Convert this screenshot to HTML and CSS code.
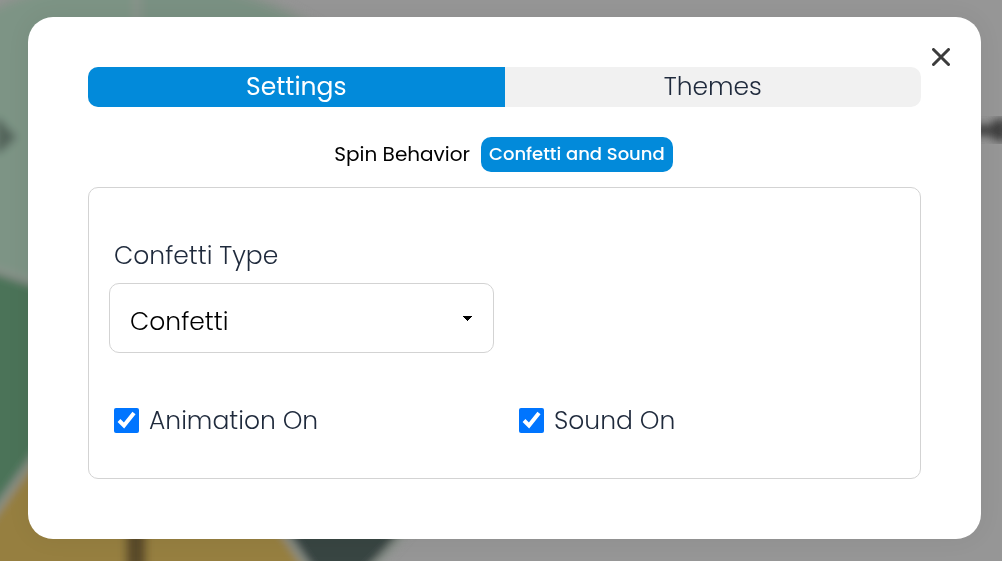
FILE: index.html
```html
<!DOCTYPE html>
<html lang="en">
<head>
<meta charset="utf-8">
<meta name="viewport" content="width=device-width, initial-scale=1">
<title>Wheel settings</title>
<link rel="stylesheet" href="styles.css">
</head>
<body>
<svg class="backdrop" aria-hidden="true">
  <defs>
    <filter id="soft" x="-10%" y="-10%" width="120%" height="120%"><feGaussianBlur stdDeviation="4"/></filter>
  </defs>
  <g filter="url(#soft)">
    <g transform="translate(137 316)" stroke="#8b938c" stroke-width="7">
      <path fill="#7d9485" d="M0 0L-323-105A340 340 0 0 1 0-340Z"/>
      <path fill="#7a9183" d="M0 0L0-340A340 340 0 0 1 323-105Z"/>
      <path fill="#374443" d="M0 0L323-105A346 346 0 0 1 194 286Z"/>
      <path fill="#967f3f" d="M0 0L194 286A346 346 0 0 1-200 275Z"/>
      <path fill="#4b7359" d="M0 0L-200 275A340 340 0 0 1-323-105Z"/>
    </g>
    <path d="M-4 120L3 128L12 137L6 143L-4 151" fill="#53645a" stroke="#53645a" stroke-width="7"/>
    <path d="M136 525V575" stroke="#5a4b29" stroke-width="20"/>
  </g>
</svg>
<svg class="marker" viewBox="0 0 24 30" aria-hidden="true">
  <path filter="url(#soft)" fill="#414141" d="M-4 8L10 11L18 4H30V26H18L10 20L-4 22Z"/>
</svg>
<main class="dialog" role="dialog" aria-label="Settings">
  <button class="close" type="button" aria-label="Close">
    <svg viewBox="0 0 18 18" aria-hidden="true"><path d="M1.5 1.5L16.5 16.5M16.5 1.5L1.5 16.5"/></svg>
  </button>
  <div class="tabs" role="tablist">
    <button class="tab tab-active" type="button" role="tab" aria-selected="true">Settings</button>
    <button class="tab" type="button" role="tab" aria-selected="false">Themes</button>
  </div>
  <div class="subtabs" role="tablist">
    <button class="subtab" type="button" role="tab" aria-selected="false">Spin Behavior</button>
    <button class="subtab subtab-active" type="button" role="tab" aria-selected="true">Confetti and Sound</button>
  </div>
  <section class="panel">
    <div class="field">
      <label class="label" for="confetti-type">Confetti Type</label>
      <div class="select-wrap">
        <select class="select" id="confetti-type"><option>Confetti</option></select>
        <svg class="arrow" viewBox="0 0 9 5" shape-rendering="crispEdges" aria-hidden="true"><path d="M0 0H9V1H8V2H7V3H6V4H5V5H4V4H3V3H2V2H1V1H0Z"/></svg>
      </div>
    </div>
    <div class="options">
      <label class="option"><input class="check" type="checkbox" checked>Animation On</label>
      <label class="option"><input class="check" type="checkbox" checked>Sound On</label>
    </div>
  </section>
</main>
</body>
</html>
```
FILE: styles.css
```css
* { box-sizing: border-box; }

body {
  margin: 0;
  min-height: 100vh;
  padding: 17px 21px 22px 28px;
  background: #969696;
  color: #1f2a3c;
  font: 300 25px/38px Poppins, Inter, "Open Sans", sans-serif;
}

button, select {
  margin: 0;
  border: 0;
  font: inherit;
  color: inherit;
  cursor: pointer;
}

.backdrop {
  position: fixed;
  inset: 0;
  width: 100%;
  height: 100%;
}

.marker {
  position: fixed;
  top: 115px;
  right: 0;
  width: 24px;
  height: 30px;
  overflow: visible;
}

.dialog {
  position: relative;
  padding: 50px 60px 60px;
  border-radius: 25px;
  background: #fff;
  box-shadow: 0 0 24px rgba(0, 0, 0, 0.06);
}

.close {
  position: absolute;
  top: 26px;
  right: 26px;
  display: grid;
  place-items: center;
  width: 28px;
  height: 28px;
  padding: 0;
  background: none;
}

.close svg {
  width: 18px;
  height: 18px;
  fill: none;
  stroke: #3c3c3c;
  stroke-width: 3;
  stroke-linecap: round;
}

.tabs {
  display: flex;
  overflow: hidden;
  border-radius: 10px;
  background: #f1f1f1;
}

.tab {
  flex: 1;
  height: 40px;
  padding: 0;
  background: none;
}

.tab-active {
  background: #028ada;
  color: #fff;
  font-weight: 400;
}

.subtabs {
  display: flex;
  justify-content: center;
  gap: 3px;
  margin: 30px 0 15px;
  padding-right: 10px;
}

.subtab {
  height: 35px;
  padding: 0 8px 1px;
  border-radius: 10px;
  background: none;
  color: #000;
  font-size: 20px;
  font-weight: 400;
  line-height: 34px;
}

.subtab-active {
  background: #028ada;
  color: #fff;
  font-size: 18px;
  font-weight: 500;
}

.panel {
  padding: 49px 20px 38px;
  border: 1px solid #d3d3d3;
  border-radius: 10px;
}

.field {
  display: flex;
  flex-direction: column;
  gap: 8px;
  width: 50%;
  padding-right: 11px;
}

.label { padding-left: 5px; }

.select-wrap { position: relative; }

.select {
  display: block;
  width: 100%;
  height: 70px;
  padding: 8px 20px 0;
  border: 1px solid #d3d3d3;
  border-radius: 10px;
  appearance: none;
  background: #fff;
  color: #000;
}

.arrow {
  position: absolute;
  top: 33px;
  right: 22px;
  width: 9px;
  height: 5px;
  pointer-events: none;
}

.options {
  display: grid;
  grid-template-columns: 1fr 1fr;
  gap: 24px;
  margin-top: 48px;
  padding-left: 5px;
}

.option {
  display: flex;
  align-items: center;
  gap: 10px;
  line-height: 39px;
}

.check {
  width: 25px;
  height: 25px;
  margin: 0;
  accent-color: #0075ff;
}
```
